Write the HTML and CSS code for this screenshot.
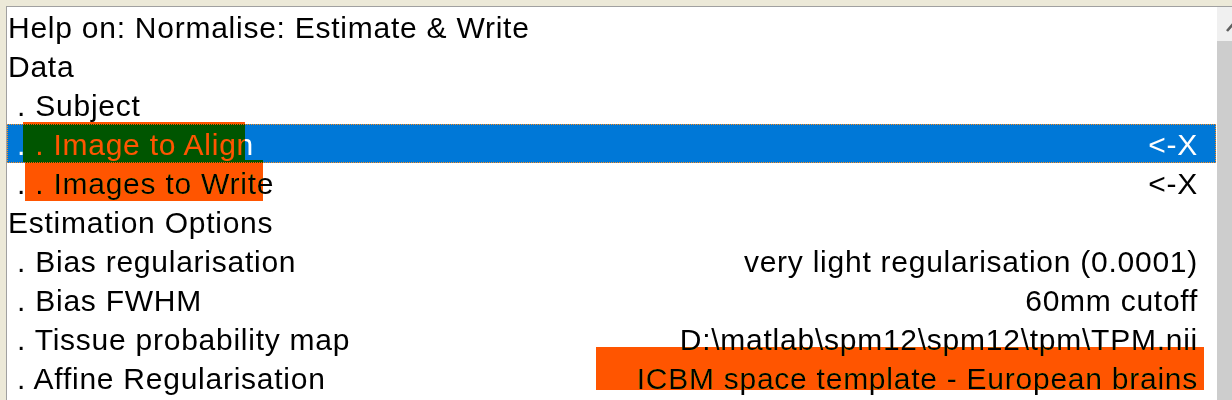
FILE: index.html
```html
<!DOCTYPE html>
<html>
<head>
<meta charset="utf-8">
<link rel="stylesheet" href="styles.css">
</head>
<body>
<div class="frame">
  <div class="listbox">
    <div class="list">
      <div class="row"><span class="label">Help on: Normalise: Estimate &amp; Write</span><span class="value"></span></div>
      <div class="row"><span class="label">Data</span><span class="value"></span></div>
      <div class="row"><span class="label"> . Subject</span><span class="value"></span></div>
      <div class="row selected"><span class="label"> . . Image to Align</span><span class="value">&lt;-X</span></div>
      <div class="row"><span class="label"> . . Images to Write</span><span class="value">&lt;-X</span></div>
      <div class="row"><span class="label">Estimation Options</span><span class="value"></span></div>
      <div class="row"><span class="label"> . Bias regularisation</span><span class="value">very light regularisation (0.0001)</span></div>
      <div class="row"><span class="label"> . Bias FWHM</span><span class="value">60mm cutoff</span></div>
      <div class="row"><span class="label"> . Tissue probability map</span><span class="value">D:\matlab\spm12\spm12\tpm\TPM.nii</span></div>
      <div class="row"><span class="label"> . Affine Regularisation</span><span class="value">ICBM space template - European brains</span></div>
    </div>
    <div class="scrollbar">
      <div class="arrow">
        <svg width="32" height="34" viewBox="0 0 32 34"><polyline points="10,24 16,17 22,24" fill="none" stroke="#606060" stroke-width="2.6"/></svg>
      </div>
      <div class="thumb"></div>
    </div>
  </div>
</div>
<div class="mark mark-align"></div>
<div class="mark mark-write"></div>
<div class="mark mark-template"></div>
</body>
</html>
```
FILE: styles.css
```css
html, body {
  margin: 0;
  padding: 0;
  background: #ece9d8;
  overflow: hidden;
  width: 1232px;
  height: 400px;
}
.frame {
  padding: 6px 0 0 6px;
}
.listbox {
  display: flex;
  width: 1226px;
  height: 394px;
  overflow: hidden;
  box-sizing: border-box;
  border-top: 1px solid #a0a0a0;
  border-left: 1px solid #a0a0a0;
  background: #fff;
}
.list {
  width: 1210px;
  flex: none;
  overflow: hidden;
}
.row {
  display: flex;
  justify-content: space-between;
  height: 39px;
  box-sizing: border-box;
  margin-right: 1px;
  padding: 2px 18px 0 1px;
  line-height: 37px;
  font-family: "Liberation Sans", Arial, sans-serif;
  font-size: 30px;
  letter-spacing: 0.75px;
  color: #000;
  white-space: pre;
}
.row.selected {
  background: #0078d7;
  color: #fff;
  outline: 1px dotted #ff8c1a;
  outline-offset: -1px;
}
.scrollbar {
  width: 32px;
  flex: none;
  display: flex;
  flex-direction: column;
}
.arrow {
  height: 34px;
  background: #f0f0f0;
}
.arrow svg {
  display: block;
}
.thumb {
  flex: 1;
  background: #cdcdcd;
}
.mark {
  position: absolute;
  background: #ff5500;
  mix-blend-mode: darken;
}
.mark-align {
  left: 23px;
  top: 122px;
  width: 222px;
  height: 40px;
}
.mark-write {
  left: 25px;
  top: 160px;
  width: 238px;
  height: 41px;
}
.mark-template {
  left: 596px;
  top: 347px;
  width: 608px;
  height: 43px;
}
```
